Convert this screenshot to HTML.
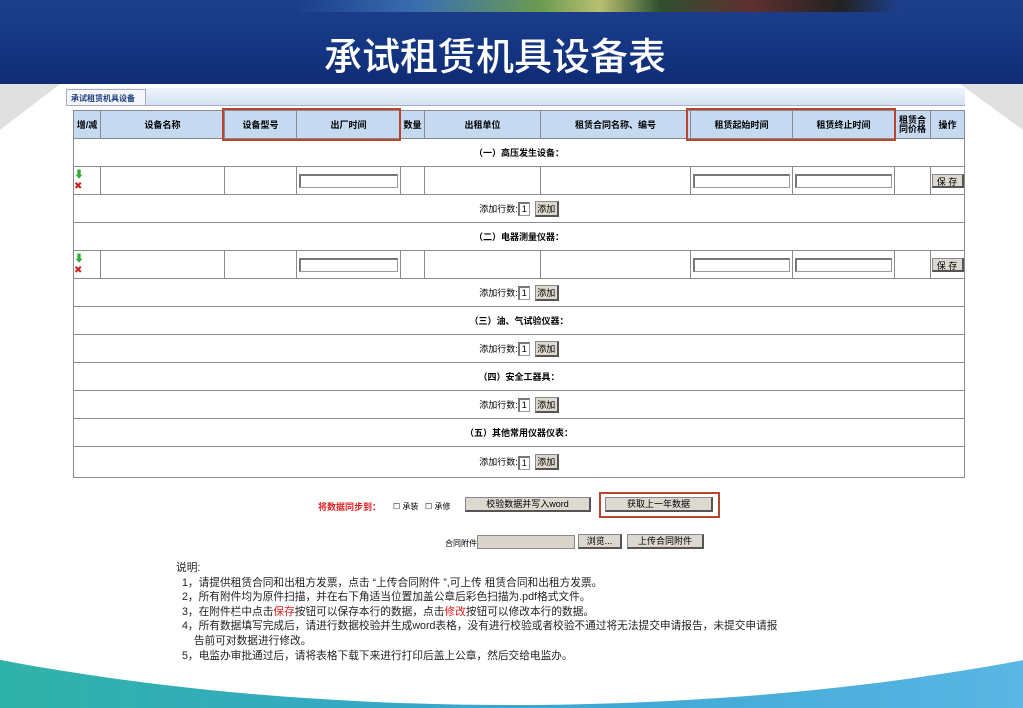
<!DOCTYPE html>
<html style="overflow:hidden;width:1023px;height:708px"><head><meta charset="utf-8"><style>
*{margin:0;padding:0;box-sizing:border-box}
html,body{width:1023px;height:708px;overflow:hidden}
body{background:#fff;font-family:"Liberation Sans","Noto Sans CJK SC",sans-serif;}
#wrap{position:relative;width:1023px;height:708px;overflow:hidden}
.abs{position:absolute}
.hdr{left:0;top:0;width:1023px;height:84px;background:linear-gradient(180deg,#1d3f8c 0%,#143582 60%,#0f2c74 100%)}
.title{left:0;top:26px;width:990px;text-align:center;color:#fff;font-size:38px;font-family:"Noto Sans CJK SC",sans-serif;font-weight:500}
table{border-collapse:collapse;table-layout:fixed;position:absolute;left:73px;top:110px;width:891px;font-size:9px}
td,th{border:1px solid #8a8a8a;text-align:center;padding:0}
th{background:#c5d9f1;font-weight:bold;height:28px;font-size:9px}
.sec{font-weight:bold;height:28px}
.in{width:96%;height:14px;border:1px solid #999;border-top:2px solid #777;border-left:2px solid #777;display:block;margin:0 auto}
.btn{background:#ddd9d0;border:1px solid #888;border-right:2px solid #555;border-bottom:2px solid #555;font-size:9px;display:inline-block;text-align:center}
.redbox{border:2px solid #b8452e}
.note{left:176px;top:561px;font-size:10.7px;line-height:14.6px;color:#222}
</style></head><body><div id="wrap">
<svg class="abs" style="left:0;top:0" width="1023" height="708"><polygon points="0,84 70,84 0,135" fill="#e0e0e0"/><polygon points="1023,84 950,84 1023,135" fill="#e0e0e0"/></svg>
<div class="abs" style="left:0;top:640px;width:1023px;height:68px;background:linear-gradient(90deg,#2fb3a8,#3aa5d0 50%,#5ab6e4)"></div>
<div class="abs" style="left:-538px;top:-5px;width:2100px;height:710px;background:#fff;border-radius:50%;z-index:0"></div>
<svg class="abs" style="left:0;top:0" width="1023" height="708"><polygon points="0,84 60,84 0,130" fill="#e0e0e0"/><polygon points="1023,84 960,84 1023,130" fill="#e0e0e0"/></svg>
<div class="abs hdr"></div>
<div class="abs" style="left:300px;top:0;width:600px;height:12px;background:linear-gradient(90deg,#1d3f8c,#3a6fb0 20%,#6a9a50 40%,#b8c070 50%,#305030 60%,#603030 75%,#222 90%,#1d3f8c)"></div>
<div class="abs title">承试租赁机具设备表</div>

<div class="abs" style="left:66px;top:88px;width:899px;height:18px;background:linear-gradient(#eef4fb,#d4e3f3);border-bottom:1px solid #aac"></div>
<div class="abs" style="left:66px;top:89px;width:80px;height:17px;background:#f3f7fc;border:1px solid #aab;font-size:8px;font-weight:bold;color:#1a3a7a;padding:3px 0 0 4px">承试租赁机具设备</div>

<table>
<colgroup><col style="width:27px"><col style="width:124px"><col style="width:72px"><col style="width:104px"><col style="width:24px"><col style="width:116px"><col style="width:150px"><col style="width:102px"><col style="width:102px"><col style="width:36px"><col style="width:34px"></colgroup>
<tr><th>增/减</th><th>设备名称</th><th>设备型号</th><th>出厂时间</th><th>数量</th><th>出租单位</th><th>租赁合同名称、编号</th><th>租赁起始时间</th><th>租赁终止时间</th><th style="line-height:9px">租赁合同价格</th><th>操作</th></tr>
<tr><td colspan="11" class="sec">（一）高压发生设备：</td></tr>
<tr style="height:28px"><td style="text-align:left;color:#3a3;font-size:10px;line-height:11px">⬇<br><span style="color:#c22">✖</span></td><td></td><td></td><td><span class="in"></span></td><td></td><td></td><td></td><td><span class="in"></span></td><td><span class="in"></span></td><td></td><td><span class="btn" style="width:32px;height:14px">保 存</span></td></tr>
<tr style="height:28px"><td colspan="11">添加行数:<span class="in" style="display:inline-block;width:12px;vertical-align:middle">1</span>&nbsp;&nbsp;<span class="btn" style="width:24px">添加</span></td></tr>
<tr><td colspan="11" class="sec">（二）电器测量仪器：</td></tr>
<tr style="height:28px"><td style="text-align:left;color:#3a3;font-size:10px;line-height:11px">⬇<br><span style="color:#c22">✖</span></td><td></td><td></td><td><span class="in"></span></td><td></td><td></td><td></td><td><span class="in"></span></td><td><span class="in"></span></td><td></td><td><span class="btn" style="width:32px;height:14px">保 存</span></td></tr>
<tr style="height:28px"><td colspan="11">添加行数:<span class="in" style="display:inline-block;width:12px;vertical-align:middle">1</span>&nbsp;&nbsp;<span class="btn" style="width:24px">添加</span></td></tr>
<tr><td colspan="11" class="sec">（三）油、气试验仪器：</td></tr>
<tr style="height:28px"><td colspan="11">添加行数:<span class="in" style="display:inline-block;width:12px;vertical-align:middle">1</span>&nbsp;&nbsp;<span class="btn" style="width:24px">添加</span></td></tr>
<tr><td colspan="11" class="sec">（四）安全工器具：</td></tr>
<tr style="height:28px"><td colspan="11">添加行数:<span class="in" style="display:inline-block;width:12px;vertical-align:middle">1</span>&nbsp;&nbsp;<span class="btn" style="width:24px">添加</span></td></tr>
<tr><td colspan="11" class="sec">（五）其他常用仪器仪表：</td></tr>
<tr style="height:31px"><td colspan="11">添加行数:<span class="in" style="display:inline-block;width:12px;vertical-align:middle">1</span>&nbsp;&nbsp;<span class="btn" style="width:24px">添加</span></td></tr>
</table>
<div class="abs redbox" style="left:222px;top:108px;width:179px;height:33px"></div>
<div class="abs redbox" style="left:686px;top:108px;width:210px;height:33px"></div>

<div class="abs" style="left:318px;top:500px;font-size:9px;color:#e02020;font-weight:bold">将数据同步到：</div>
<div class="abs" style="left:393px;top:501px;font-size:8px">☐ 承装 &nbsp;&nbsp;☐ 承修</div>
<div class="abs btn" style="left:465px;top:497px;width:126px;height:15px;line-height:12px">校验数据并写入word</div>
<div class="abs redbox" style="left:599px;top:492px;width:121px;height:26px"></div>
<div class="abs btn" style="left:605px;top:497px;width:108px;height:15px;line-height:12px">获取上一年数据</div>

<div class="abs" style="left:445px;top:538px;font-size:8px">合同附件</div>
<div class="abs" style="left:477px;top:535px;width:98px;height:14px;background:#d9d5cc;border:1px solid #888"></div>
<div class="abs btn" style="left:578px;top:534px;width:44px;height:15px;line-height:12px">浏览...</div>
<div class="abs btn" style="left:627px;top:534px;width:77px;height:15px;line-height:12px">上传合同附件</div>

<div class="abs note">说明:<br>
&nbsp;&nbsp;1，请提供租赁合同和出租方发票，点击 “上传合同附件 ”,可上传 租赁合同和出租方发票。<br>
&nbsp;&nbsp;2，所有附件均为原件扫描，并在右下角适当位置加盖公章后彩色扫描为.pdf格式文件。<br>
&nbsp;&nbsp;3，在附件栏中点击<span style="color:#e02020">保存</span>按钮可以保存本行的数据，点击<span style="color:#e02020">修改</span>按钮可以修改本行的数据。<br>
&nbsp;&nbsp;4，所有数据填写完成后，请进行数据校验并生成word表格，没有进行校验或者校验不通过将无法提交申请报告，未提交申请报<br>
&nbsp;&nbsp;&nbsp;&nbsp;&nbsp;&nbsp;告前可对数据进行修改。<br>
&nbsp;&nbsp;5，电监办审批通过后，请将表格下载下来进行打印后盖上公章，然后交给电监办。</div>
</div></body></html>
